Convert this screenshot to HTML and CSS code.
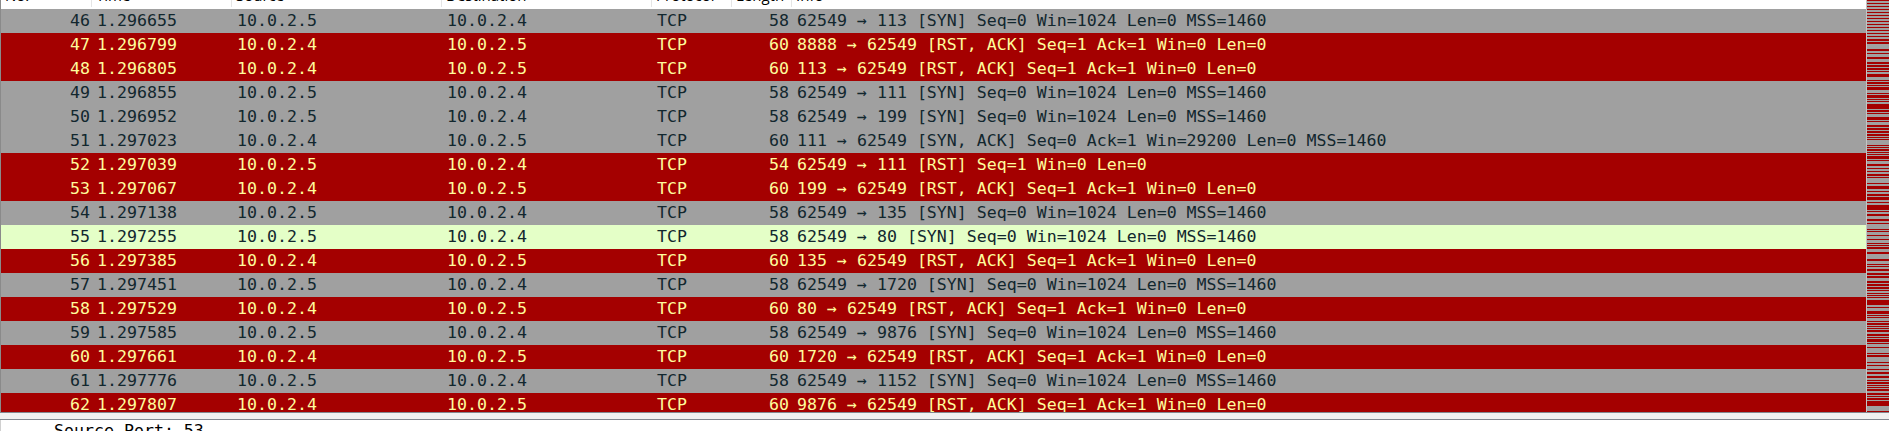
FILE: index.html
```html
<!DOCTYPE html>
<html>
<head>
<meta charset="utf-8">
<link rel="stylesheet" href="styles.css">
</head>
<body>
<div class="app">
  <div class="top">
    <div class="list">
      <div class="head-clip">
        <div class="head row-grid">
          <div class="hc">No.</div>
          <div class="hc">Time</div>
          <div class="hc">Source</div>
          <div class="hc">Destination</div>
          <div class="hc">Protocol</div>
          <div class="hc">Length</div>
          <div class="hc last">Info</div>
        </div>
      </div>
      <div class="rows">
        <div class="row row-grid syn"><span class="num">46</span><span>1.296655</span><span>10.0.2.5</span><span>10.0.2.4</span><span>TCP</span><span class="len">58</span><span>62549 → 113 [SYN] Seq=0 Win=1024 Len=0 MSS=1460</span></div>
        <div class="row row-grid bad"><span class="num">47</span><span>1.296799</span><span>10.0.2.4</span><span>10.0.2.5</span><span>TCP</span><span class="len">60</span><span>8888 → 62549 [RST, ACK] Seq=1 Ack=1 Win=0 Len=0</span></div>
        <div class="row row-grid bad"><span class="num">48</span><span>1.296805</span><span>10.0.2.4</span><span>10.0.2.5</span><span>TCP</span><span class="len">60</span><span>113 → 62549 [RST, ACK] Seq=1 Ack=1 Win=0 Len=0</span></div>
        <div class="row row-grid syn"><span class="num">49</span><span>1.296855</span><span>10.0.2.5</span><span>10.0.2.4</span><span>TCP</span><span class="len">58</span><span>62549 → 111 [SYN] Seq=0 Win=1024 Len=0 MSS=1460</span></div>
        <div class="row row-grid syn"><span class="num">50</span><span>1.296952</span><span>10.0.2.5</span><span>10.0.2.4</span><span>TCP</span><span class="len">58</span><span>62549 → 199 [SYN] Seq=0 Win=1024 Len=0 MSS=1460</span></div>
        <div class="row row-grid syn"><span class="num">51</span><span>1.297023</span><span>10.0.2.4</span><span>10.0.2.5</span><span>TCP</span><span class="len">60</span><span>111 → 62549 [SYN, ACK] Seq=0 Ack=1 Win=29200 Len=0 MSS=1460</span></div>
        <div class="row row-grid bad"><span class="num">52</span><span>1.297039</span><span>10.0.2.5</span><span>10.0.2.4</span><span>TCP</span><span class="len">54</span><span>62549 → 111 [RST] Seq=1 Win=0 Len=0</span></div>
        <div class="row row-grid bad"><span class="num">53</span><span>1.297067</span><span>10.0.2.4</span><span>10.0.2.5</span><span>TCP</span><span class="len">60</span><span>199 → 62549 [RST, ACK] Seq=1 Ack=1 Win=0 Len=0</span></div>
        <div class="row row-grid syn"><span class="num">54</span><span>1.297138</span><span>10.0.2.5</span><span>10.0.2.4</span><span>TCP</span><span class="len">58</span><span>62549 → 135 [SYN] Seq=0 Win=1024 Len=0 MSS=1460</span></div>
        <div class="row row-grid http"><span class="num">55</span><span>1.297255</span><span>10.0.2.5</span><span>10.0.2.4</span><span>TCP</span><span class="len">58</span><span>62549 → 80 [SYN] Seq=0 Win=1024 Len=0 MSS=1460</span></div>
        <div class="row row-grid bad"><span class="num">56</span><span>1.297385</span><span>10.0.2.4</span><span>10.0.2.5</span><span>TCP</span><span class="len">60</span><span>135 → 62549 [RST, ACK] Seq=1 Ack=1 Win=0 Len=0</span></div>
        <div class="row row-grid syn"><span class="num">57</span><span>1.297451</span><span>10.0.2.5</span><span>10.0.2.4</span><span>TCP</span><span class="len">58</span><span>62549 → 1720 [SYN] Seq=0 Win=1024 Len=0 MSS=1460</span></div>
        <div class="row row-grid bad"><span class="num">58</span><span>1.297529</span><span>10.0.2.4</span><span>10.0.2.5</span><span>TCP</span><span class="len">60</span><span>80 → 62549 [RST, ACK] Seq=1 Ack=1 Win=0 Len=0</span></div>
        <div class="row row-grid syn"><span class="num">59</span><span>1.297585</span><span>10.0.2.5</span><span>10.0.2.4</span><span>TCP</span><span class="len">58</span><span>62549 → 9876 [SYN] Seq=0 Win=1024 Len=0 MSS=1460</span></div>
        <div class="row row-grid bad"><span class="num">60</span><span>1.297661</span><span>10.0.2.4</span><span>10.0.2.5</span><span>TCP</span><span class="len">60</span><span>1720 → 62549 [RST, ACK] Seq=1 Ack=1 Win=0 Len=0</span></div>
        <div class="row row-grid syn"><span class="num">61</span><span>1.297776</span><span>10.0.2.5</span><span>10.0.2.4</span><span>TCP</span><span class="len">58</span><span>62549 → 1152 [SYN] Seq=0 Win=1024 Len=0 MSS=1460</span></div>
        <div class="row row-grid bad"><span class="num">62</span><span>1.297807</span><span>10.0.2.4</span><span>10.0.2.5</span><span>TCP</span><span class="len">60</span><span>9876 → 62549 [RST, ACK] Seq=1 Ack=1 Win=0 Len=0</span></div>
      </div>
    </div>
    <div class="minimap" id="minimap"></div>
  </div>
  <div class="hscroll"></div>
  <div class="detail">
    <div class="detail-line">Source Port: 53</div>
  </div>
</div>
<script src="script.js"></script>
</body>
</html>
```

FILE: styles.css
```css
html, body {
  margin: 0;
  padding: 0;
  background: #ffffff;
  overflow: hidden;
}

.app {
  width: 1889px;
  height: 431px;
  display: flex;
  flex-direction: column;
  font-family: "DejaVu Sans Mono", "Liberation Mono", monospace;
  font-size: 16.6px;
}

.top {
  height: 412px;
  display: flex;
  flex-direction: row;
  flex: none;
}

.list {
  flex: 1;
  border-left: 1px solid #8a8a8a;
  overflow: hidden;
  display: flex;
  flex-direction: column;
}

.row-grid {
  display: grid;
  grid-template-columns: 91px 140px 210px 210px 80px 60px 1fr;
}

.head-clip {
  height: 9px;
  overflow: hidden;
  flex: none;
  background: #ffffff;
}

.head {
  height: 24px;
  margin-top: -17px;
  font-family: "Open Sans", "Noto Sans", sans-serif;
  font-size: 15px;
  line-height: 24px;
  color: #000000;
}

.hc {
  padding-left: 4px;
  border-right: 1px solid #e5e5e5;
  white-space: nowrap;
  overflow: hidden;
}

.hc.last {
  border-right: none;
}

.rows {
  display: flex;
  flex-direction: column;
}

.row {
  height: 24px;
  line-height: 24px;
  white-space: nowrap;
  flex: none;
}

.row span {
  padding-left: 5px;
  overflow: visible;
}

.row span.num {
  text-align: right;
  padding-left: 0;
  padding-right: 2px;
}

.row span.len {
  text-align: right;
  padding-left: 0;
  padding-right: 3px;
}

.syn {
  background: #a0a0a0;
  color: #12272e;
}

.bad {
  background: #a40000;
  color: #fffc9c;
}

.http {
  background: #e4ffc7;
  color: #12272e;
}

.minimap {
  width: 22px;
  flex: none;
  border-left: 1px solid #c4c4c4;
  background: #a0a0a0;
  display: flex;
  flex-direction: column;
  overflow: hidden;
}

.mm {
  flex: none;
  width: 100%;
}

.mm.r {
  background: #a40000;
}

.mm.g {
  background: #a0a0a0;
}

.hscroll {
  flex: none;
  height: 6px;
  background: #f0f0f0;
  border-top: 1px solid #82878f;
  border-bottom: 1px solid #82878f;
}

.detail {
  flex: 1;
  background: #ffffff;
  border-left: 1px solid #d0d0d0;
  overflow: hidden;
}

.detail-line {
  padding-left: 53px;
  line-height: 22px;
  color: #000000;
  white-space: nowrap;
}
```

FILE: script.js
```js
(function () {
  var mm = document.getElementById('minimap');
  var seed = 12345;
  function rnd() {
    seed = (seed * 1103515245 + 12345) & 0x7fffffff;
    return seed / 0x7fffffff;
  }
  var y = 0;
  var total = 412;
  var red = true;
  while (y < total) {
    var h;
    if (y < 38) {
      h = red ? 1 : 2;
    } else {
      var p = rnd();
      if (red) {
        h = p < 0.55 ? 1 : (p < 0.8 ? 2 : (p < 0.93 ? 3 : 5));
      } else {
        h = p < 0.5 ? 1 : (p < 0.8 ? 2 : (p < 0.93 ? 3 : 5));
      }
    }
    if (y + h > total) h = total - y;
    var d = document.createElement('div');
    d.className = 'mm ' + (red ? 'r' : 'g');
    d.style.height = h + 'px';
    mm.appendChild(d);
    y += h;
    red = !red;
  }
})();
```
